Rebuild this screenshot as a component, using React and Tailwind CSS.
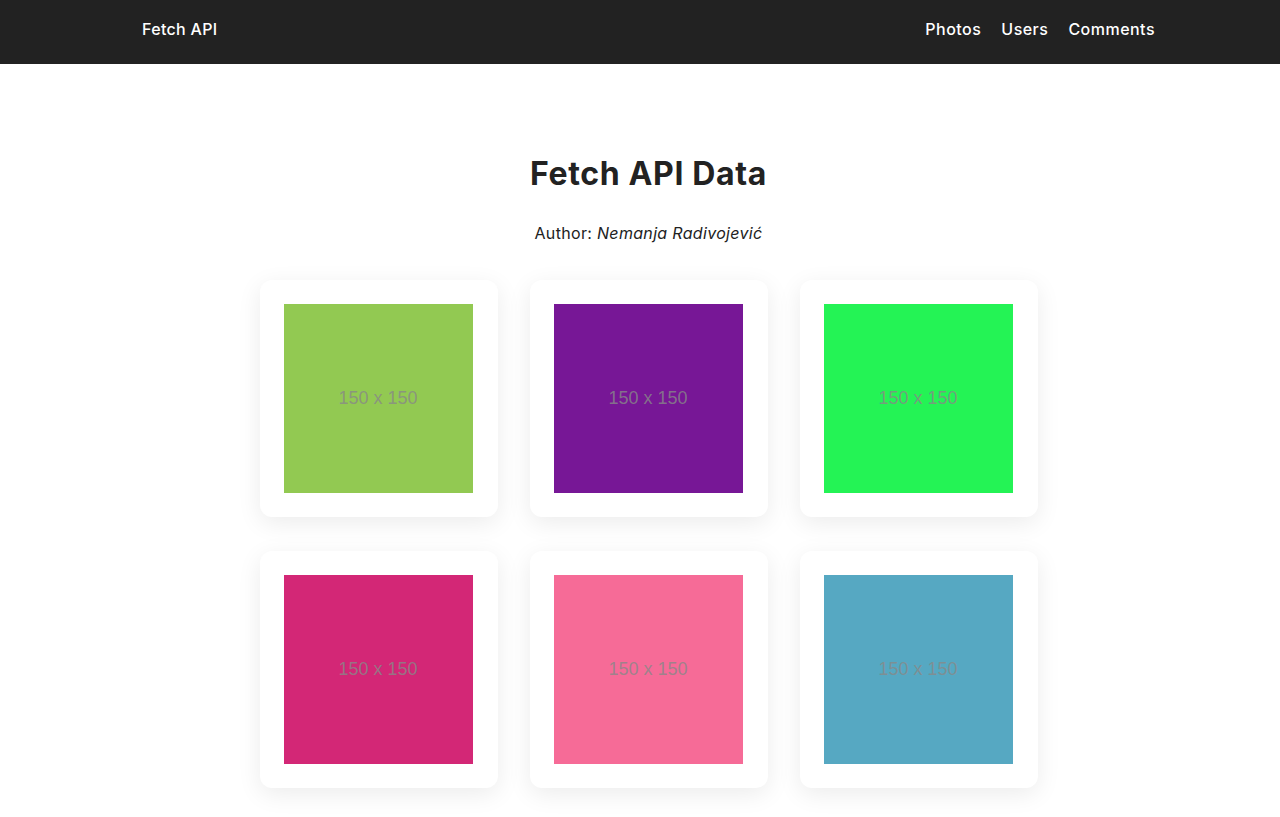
import React from "react";

function App() {
  const photos = [
    { id: 1, color: "#92c952" },
    { id: 2, color: "#771796" },
    { id: 3, color: "#24f355" },
    { id: 4, color: "#d32776" },
    { id: 5, color: "#f66b97" },
    { id: 6, color: "#56a8c2" },
  ];

  return (
    <div className="min-h-screen bg-white font-['Inter',sans-serif] text-[#222]">
      <header className="bg-[#222222] h-16 pl-[17px]">
        <div className="w-[1013px] mx-auto h-full pb-[6px] flex items-center justify-between">
          <a className="text-white font-medium text-base tracking-[0.02em]">Fetch API</a>
          <nav className="flex gap-5">
            <a className="text-white font-medium text-base tracking-[0.03em]">Photos</a>
            <a className="text-white font-medium text-base tracking-[0.03em]">Users</a>
            <a className="text-white font-medium text-base tracking-[0.03em]">Comments</a>
          </nav>
        </div>
      </header>

      <main className="pl-[17px] pt-[90px] pb-8">
        <h1 className="text-center text-[32px] font-bold leading-10 tracking-[0.02em]">Fetch API Data</h1>
        <p className="text-center mt-[27px] text-base tracking-[0.02em]">
          Author: <em>Nemanja Radivojević</em>
        </p>

        <div className="grid grid-cols-3 gap-x-8 gap-y-[34px] w-[778px] mx-auto mt-[35px]">
          {photos.map((p) => (
            <div
              key={p.id}
              className="bg-white rounded-xl p-6 shadow-[0_6px_24px_rgba(0,0,0,0.08)]"
            >
              <div
                className="w-[189px] h-[189px] flex items-center justify-center"
                style={{ backgroundColor: p.color }}
              >
                <span className="font-['Liberation_Sans',sans-serif] text-[18px] text-[#888]/80">
                  150 x 150
                </span>
              </div>
            </div>
          ))}
        </div>
      </main>
    </div>
  );
}

export default App;
